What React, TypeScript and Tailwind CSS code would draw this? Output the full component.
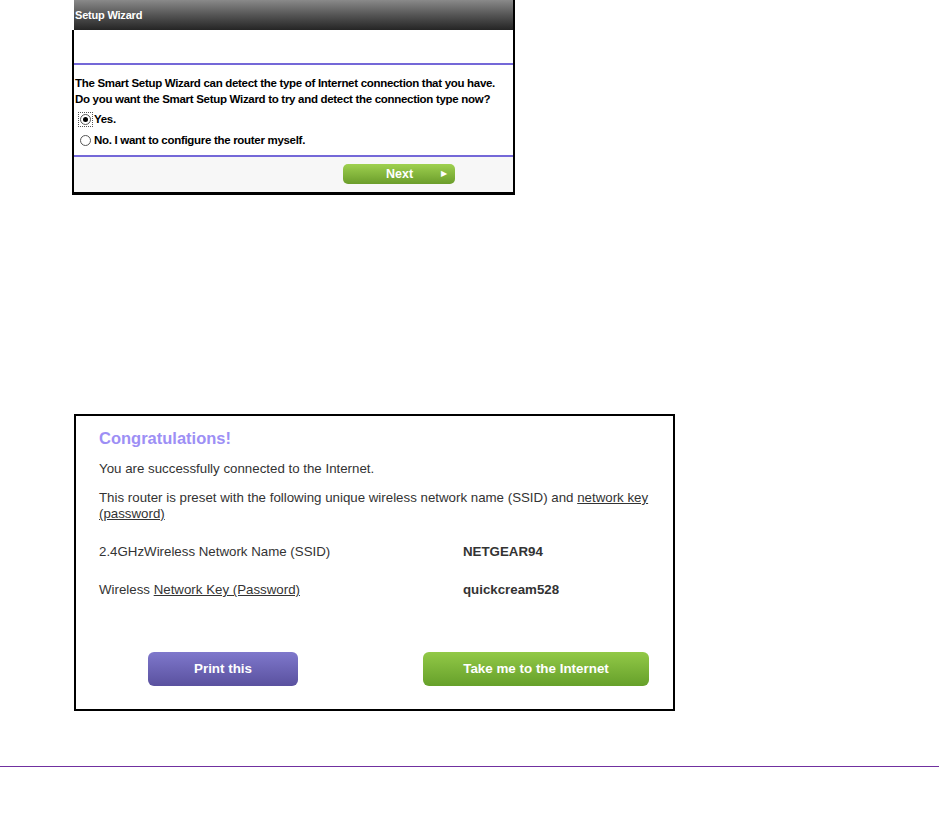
import React from "react";

function Radio({ checked }: { checked?: boolean }) {
  return (
    <span className={"relative inline-flex items-center justify-center w-[13px] h-[13px] mr-[2px] " + (checked ? "outline outline-1 outline-dotted outline-[#555]" : "")}>
      <span className="w-[11px] h-[11px] rounded-full border border-[#555] bg-white flex items-center justify-center">
        {checked ? <span className="w-[5px] h-[5px] rounded-full bg-black" /> : null}
      </span>
    </span>
  );
}

export default function App() {
  return (
    <div className="w-[939px] h-[836px] bg-white relative" style={{ fontFamily: '"Liberation Sans", Arial, sans-serif' }}>
      {/* Top wizard box */}
      <div className="ml-[72px] w-[443px]">
        <div className="ml-[2px] h-[30px] border-r-2 border-black bg-gradient-to-b from-[#8a8a8a] via-[#555] to-[#252525] flex items-center pl-[1px]">
          <span className="text-white font-bold text-[11px] tracking-[-0.2px]">Setup Wizard</span>
        </div>
        <div className="border-l-2 border-r-2 border-b-[3px] border-black">
          <div className="h-[33px]" />
          <div className="h-[2px] bg-[#7468d8]" />
          <div className="pt-[10px] pl-[1px] text-[11.5px] font-bold text-black leading-[16px] tracking-[-0.3px] h-[90px]">
            <div>The Smart Setup Wizard can detect the type of Internet connection that you have.</div>
            <div>Do you want the Smart Setup Wizard to try and detect the connection type now?</div>
            <div className="flex items-center mt-[4px] ml-[4px] h-[16px]">
              <Radio checked />
              <span>Yes.</span>
            </div>
            <div className="flex items-center mt-[5px] ml-[4px] h-[16px]">
              <Radio />
              <span>No. I want to configure the router myself.</span>
            </div>
          </div>
          <div className="h-[2px] bg-[#7468d8]" />
          <div className="h-[35px] bg-[#f7f7f7] flex items-start pt-[7px]">
            <div className="ml-[269px] w-[112px] h-[20px] rounded-[5px] bg-gradient-to-b from-[#9fd14f] to-[#6b9d2b] flex items-center relative">
              <span className="ml-[43px] text-white font-bold text-[12.5px]">Next</span>
              <span className="ml-[28px] text-white text-[8px]">▶</span>
            </div>
          </div>
        </div>
      </div>

      {/* Congratulations box */}
      <div className="ml-[74px] mt-[219px] w-[601px] h-[297px] border-2 border-black px-[23px] text-[#333] text-[13.3px]">
        <div className="mt-[13px] text-[16.5px] font-bold text-[#9d8ff5] leading-[19px]">Congratulations!</div>
        <div className="mt-[13px] leading-[16px]">You are successfully connected to the Internet.</div>
        <div className="mt-[13px] leading-[16px]">
          This router is preset with the following unique wireless network name (SSID) and <span className="underline">network key (password)</span>
        </div>
        <div className="mt-[22px] flex leading-[16px]">
          <div className="w-[364px]">2.4GHzWireless Network Name (SSID)</div>
          <div className="font-bold">NETGEAR94</div>
        </div>
        <div className="mt-[22px] flex leading-[16px]">
          <div className="w-[364px]">Wireless <span className="underline">Network Key (Password)</span></div>
          <div className="font-bold">quickcream528</div>
        </div>
        <div className="mt-[54px] flex">
          <div className="ml-[49px] w-[150px] h-[34px] rounded-[6px] bg-gradient-to-b from-[#7f78cc] to-[#5a519f] flex items-center justify-center text-white font-bold text-[13.4px]">
            Print this
          </div>
          <div className="ml-[125px] w-[226px] h-[34px] rounded-[6px] bg-gradient-to-b from-[#92c947] to-[#66a02a] flex items-center justify-center text-white font-bold text-[13.4px]">
            Take me to the Internet
          </div>
        </div>
      </div>

      {/* Bottom rule */}
      <div className="mt-[55px] h-[1px] bg-[#7030a0]" />
    </div>
  );
}
